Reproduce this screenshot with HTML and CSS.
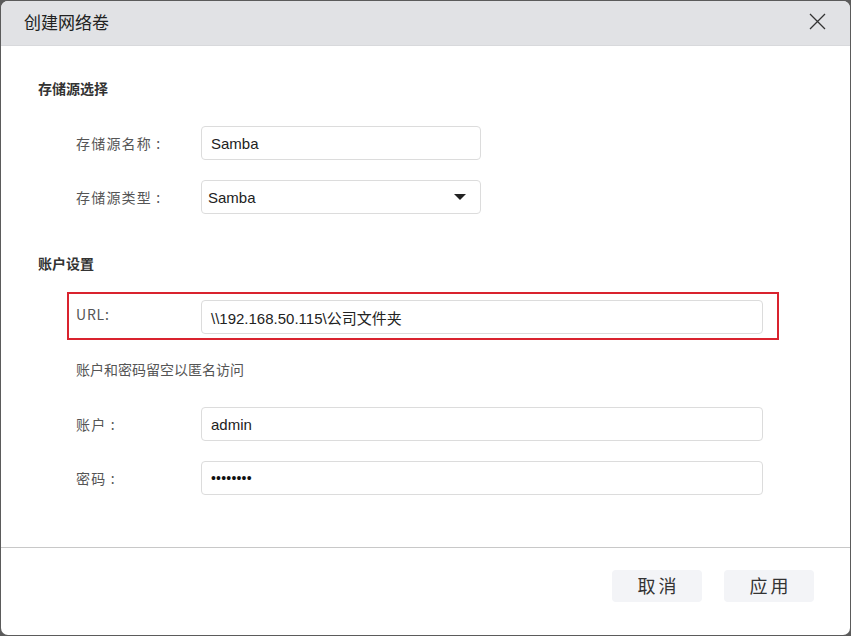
FILE: index.html
```html
<!DOCTYPE html>
<html lang="zh-CN">
<head>
<meta charset="utf-8">
<title>创建网络卷</title>
<link rel="stylesheet" href="styles.css">
</head>
<body>
<div class="dialog">
  <div class="header">
    <span class="title">创建网络卷</span>
    <span class="close">
      <svg width="17" height="17" viewBox="0 0 17 17"><path d="M1 1 L16 16 M16 1 L1 16" stroke="#333" stroke-width="1.3" fill="none"/></svg>
    </span>
  </div>
  <div class="body">
    <div class="section-title">存储源选择</div>
    <div class="rows rows-a">
      <div class="row">
        <span class="label">存储源名称 :</span>
        <div class="input short">Samba</div>
      </div>
      <div class="row">
        <span class="label">存储源类型 :</span>
        <div class="input short select"><span>Samba</span><span class="caret"></span></div>
      </div>
    </div>
    <div class="section-title second">账户设置</div>
    <div class="highlight">
      <div class="row">
        <span class="label label-hl">URL:</span>
        <div class="input long">\\192.168.50.115\公司文件夹</div>
      </div>
    </div>
    <div class="hint">账户和密码留空以匿名访问</div>
    <div class="rows rows-b">
      <div class="row">
        <span class="label">账户 :</span>
        <div class="input long">admin</div>
      </div>
      <div class="row">
        <span class="label">密码 :</span>
        <div class="input long pwd">••••••••</div>
      </div>
    </div>
  </div>
  <div class="footer">
    <button class="btn">取消</button>
    <button class="btn">应用</button>
  </div>
</div>
</body>
</html>
```
FILE: styles.css
```css
* { box-sizing: border-box; }
html, body { margin: 0; padding: 0; }
body {
  width: 851px;
  height: 636px;
  background: #5b5b5b;
  padding: 1px 1px 1px 1px;
  font-family: "Liberation Sans", "Noto Sans CJK SC", sans-serif;
  overflow: hidden;
}
.dialog {
  width: 849px;
  height: 634px;
  background: #fff;
  border-radius: 7px;
  overflow: hidden;
  display: flex;
  flex-direction: column;
}
.header {
  height: 45px;
  background: #e1e2e5;
  border-bottom: 1px solid #d8d9dc;
  display: flex;
  align-items: center;
  justify-content: space-between;
  padding: 0 24px 0 23px;
  flex: none;
}
.title {
  font-family: "Noto Sans CJK SC", sans-serif;
  font-size: 17px;
  color: #222;
  margin-top: -3px;
}
.close { display: flex; margin-top: -3px; }
.body {
  flex: 1;
  padding: 32px 0 0 37px;
  font-family: "Noto Sans CJK SC", sans-serif;
}
.section-title {
  font-size: 14px;
  font-weight: bold;
  color: #333;
  line-height: 20px;
  height: 20px;
}
.section-title.second { margin-top: 39px; }
.rows { display: flex; flex-direction: column; gap: 20px; padding-left: 38px; }
.rows-a { margin-top: 28px; }
.rows-b { margin-top: 28px; }
.row { display: flex; align-items: center; }
.label {
  width: 125px;
  font-size: 14px;
  color: #555;
  flex: none;
  letter-spacing: 1.2px;
}
.input {
  height: 34px;
  border: 1px solid #dcdcdc;
  border-radius: 4px;
  display: flex;
  align-items: center;
  padding: 0 9px;
  font-family: "Liberation Sans", "Noto Sans CJK SC", sans-serif;
  font-size: 15px;
  color: #222;
  background: #fff;
}
.short { width: 280px; }
.long { width: 562px; }
.select { justify-content: space-between; padding: 0 14px 0 6px; }
.caret {
  width: 0; height: 0;
  border-left: 6px solid transparent;
  border-right: 6px solid transparent;
  border-top: 6px solid #222;
}
.pwd { font-size: 14px; letter-spacing: 0.2px; color: #111; }
.highlight {
  margin-top: 19px;
  margin-left: 29px;
  width: 712px;
  height: 48px;
  border: 2px solid #d9232e;
  padding: 6px 0 0 7px;
}
.label-hl { width: 125px; margin-top: -6px; letter-spacing: 0.8px; }
.hint {
  margin-top: 19px;
  padding-left: 38px;
  font-size: 14px;
  color: #555;
  line-height: 20px;
}
.footer {
  flex: none;
  height: 88px;
  border-top: 1px solid #c8c8c8;
  display: flex;
  justify-content: flex-end;
  align-items: flex-start;
  gap: 22px;
  padding: 22px 36px 0 0;
}
.btn {
  width: 90px;
  height: 32px;
  border: none;
  border-radius: 4px;
  background: #f3f4f7;
  font-family: "Noto Sans CJK SC", sans-serif;
  font-size: 18px;
  line-height: 30px;
  letter-spacing: 3px;
  color: #333;
  padding: 0 0 2px 3px;
}
```
